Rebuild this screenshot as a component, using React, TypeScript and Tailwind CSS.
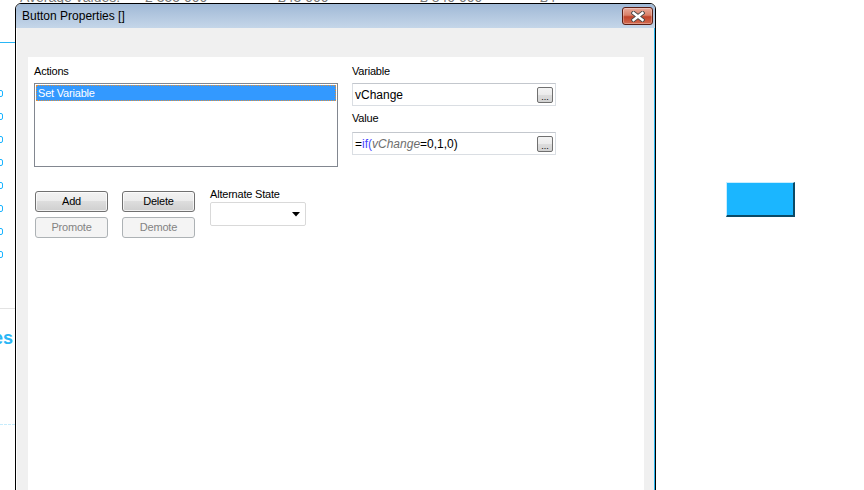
import React from 'react';

const font = "font-['Liberation_Sans',Arial,sans-serif]";

function Label({ children }: { children: React.ReactNode }) {
  return <div className="h-[14px] text-[11px] leading-[14px] tracking-[-0.2px] text-black">{children}</div>;
}

function WinButton({ children, disabled = false }: { children: React.ReactNode; disabled?: boolean }) {
  return (
    <div
      className={
        disabled
          ? 'h-[21px] rounded-[3px] border border-[#adb2b5] bg-[#f4f4f4] text-[#838383] flex items-center justify-center text-[11px] tracking-[-0.2px]'
          : 'h-[21px] rounded-[3px] border border-[#707070] bg-[linear-gradient(#f2f2f2_0%,#ebebeb_50%,#dddddd_50%,#cfcfcf_100%)] text-black flex items-center justify-center text-[11px] tracking-[-0.2px] shadow-[inset_0_0_0_1px_rgba(255,255,255,0.7)]'
      }
    >
      {children}
    </div>
  );
}

function EllipsisButton() {
  return (
    <div className="w-[16px] h-[16px] mr-[2px] rounded-[2px] border border-[#707070] bg-[linear-gradient(#f4f4f4_0%,#ebebeb_50%,#dddddd_50%,#d2d2d2_100%)] flex items-end justify-center pb-[1px] text-[9px] leading-[8px] text-black">
      ...
    </div>
  );
}

function CloseButton() {
  return (
    <div className="w-[31px] h-[18px] rounded-[3px] border border-[#5a1e14] bg-[linear-gradient(#e9aa9b_0%,#d98068_45%,#c0432a_55%,#d36b50_100%)] flex items-center justify-center shadow-[inset_0_0_0_1px_rgba(255,255,255,0.3)]">
      <svg width="14" height="11" viewBox="0 0 14 11">
        <path d="M2.5 2 L11.5 9 M11.5 2 L2.5 9" stroke="#4a4a4a" strokeWidth="4.2" strokeLinecap="square" />
        <path d="M2.5 2 L11.5 9 M11.5 2 L2.5 9" stroke="#ffffff" strokeWidth="2.4" strokeLinecap="square" />
      </svg>
    </div>
  );
}

export default function App() {
  const checkboxes = [0, 1, 2, 3, 4, 5, 6, 7];
  return (
    <div className={`relative w-[864px] h-[490px] overflow-hidden bg-white ${font}`}>
      {/* Background sheet, mostly hidden behind the dialog */}
      <div className="h-[3px] overflow-hidden flex pl-[20px] text-[14px] leading-[14px] text-[#777]">
        <span className="-mt-[10px] w-[125px] shrink-0">Average values:</span>
        <span className="-mt-[10px] w-[133px] shrink-0">2 355 000</span>
        <span className="-mt-[10px] w-[142px] shrink-0">£43 000</span>
        <span className="-mt-[10px] w-[120px] shrink-0">£ 840 000</span>
        <span className="-mt-[10px] shrink-0">£4</span>
      </div>
      <div className="flex">
        <div className="w-[15px] shrink-0 overflow-hidden flex flex-col">
          <div className="mt-[39px] h-px bg-[#29b6f6]" />
          <div className="mt-[47px] flex flex-col gap-[16px]">
            {checkboxes.map((i) => (
              <div key={i} className="w-[8px] h-[7px] -ml-[5px] rounded-[2px] border border-[#1ab4ff]" />
            ))}
          </div>
          <div className="mt-[50px] h-px bg-[#e3e3e3]" />
          <div className="mt-[20px] h-[18px] text-[18px] leading-[18px] font-bold text-[#29b6f6] flex justify-end pr-[2px] whitespace-nowrap">
            es
          </div>
          <div className="mt-[77px] border-t border-dashed border-[#c6ecfc]" />
        </div>
        <div className="flex-1 pl-[711px] pt-[179px]">
          <div className="w-[69px] h-[35px] bg-[#1bb6ff] border-t border-l border-t-[#c8eeff] border-l-[#c8eeff] border-b-2 border-r-2 border-b-[#0b4a66] border-r-[#0b4a66]" />
        </div>
      </div>

      {/* Dialog window */}
      <div className="absolute left-[15px] top-[3px] w-[641px] h-[520px] border border-black rounded-t-[6px] overflow-hidden flex flex-col">
        <div className="h-[24px] shrink-0 bg-[linear-gradient(#a0b9d6,#c5d6e9)] flex items-start justify-between pl-[6px] pr-[2px]">
          <span className="mt-[5px] text-[12px] leading-[14px] text-black">Button Properties []</span>
          <div className="mt-[3px]">
            <CloseButton />
          </div>
        </div>
        <div className="flex-1 flex flex-col bg-[#f0f0f0] border-l border-l-white border-r border-r-[#2ab6ee] pt-[29px] pl-[11px] pr-[10px]">
          <div className="flex-1 bg-white pt-[7px] pl-[6px]">
            <div className="flex items-start">
              <div className="w-[304px]">
                <Label>Actions</Label>
                <div className="mt-[5px] h-[84px] border border-[#828790] p-px">
                  <div className="h-[16px] bg-[#3399ff] border border-dotted border-[#e0903a] text-white text-[11px] leading-[14px] tracking-[-0.2px] pl-[1px]">
                    Set Variable
                  </div>
                </div>
              </div>
              <div className="ml-[14px] w-[204px]">
                <Label>Variable</Label>
                <div className="mt-[5px] h-[23px] border border-[#dadee3] border-t-[#c3c7cd] flex items-center justify-between pl-[2px]">
                  <span className="text-[12px] leading-[14px] text-black">vChange</span>
                  <EllipsisButton />
                </div>
                <div className="mt-[5px]">
                  <Label>Value</Label>
                </div>
                <div className="mt-[7px] h-[23px] border border-[#dadee3] border-t-[#c3c7cd] flex items-center justify-between pl-[2px]">
                  <span className="text-[12px] leading-[14px] text-black">
                    =<span className="text-[#4646ff]">if(</span>
                    <span className="italic text-[#6e6e6e]">vChange</span>=0,1,0)
                  </span>
                  <EllipsisButton />
                </div>
              </div>
            </div>

            <div className="mt-[20px] flex items-start">
              <div className="pl-[1px] pt-[4px] grid grid-cols-[73px_73px] gap-x-[14px] gap-y-[5px]">
                <WinButton>Add</WinButton>
                <WinButton>Delete</WinButton>
                <WinButton disabled>Promote</WinButton>
                <WinButton disabled>Demote</WinButton>
              </div>
              <div className="ml-[15px]">
                <Label>Alternate State</Label>
                <div className="mt-[1px] w-[96px] h-[24px] rounded-[2px] border border-[#d9d9d9] bg-white flex items-center justify-end pr-[5px]">
                  <svg width="8" height="5" viewBox="0 0 8 5">
                    <path d="M0 0 H8 L4 4.5 Z" fill="#000" />
                  </svg>
                </div>
              </div>
            </div>
          </div>
        </div>
      </div>
    </div>
  );
}
